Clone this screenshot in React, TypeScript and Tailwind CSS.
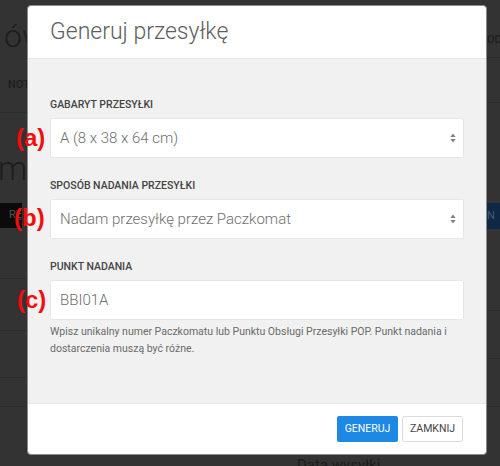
import { useState } from 'react';

function Arrows() {
  return (
    <svg className="pointer-events-none absolute right-[8px] top-1/2 -translate-y-1/2" width="6" height="10" viewBox="0 0 6 10">
      <path d="M3 0.5 L5.6 4 H0.4 Z" fill="#808080" />
      <path d="M3 9.5 L5.6 6 H0.4 Z" fill="#808080" />
    </svg>
  );
}

function Label({ children }: { children: string }) {
  return <div className="mb-[6px] h-[14px] text-[10.5px] font-medium uppercase leading-[14px] text-[#444]">{children}</div>;
}

function Note({ children, className }: { children: string; className: string }) {
  return (
    <div className={`pointer-events-none absolute font-['Liberation_Sans',sans-serif] text-[24px] font-bold leading-[28px] text-[#f20d0d] ${className}`}>
      {children}
    </div>
  );
}

export default function App() {
  const [size, setSize] = useState('A');
  const [mode, setMode] = useState('paczkomat');
  const [point, setPoint] = useState('BBI01A');

  const field = 'h-[40px] w-full rounded-[2px] border border-[#e6e6e6] bg-white pl-[9px] text-[15px] font-light text-[#6e6e6e] outline-none';

  return (
    <div className="relative h-[466px] w-[500px] overflow-hidden bg-[#333333] font-['Roboto',sans-serif]">
      {/* dimmed page behind the dialog */}
      <div className="flex h-full">
        <div className="w-[27px] shrink-0 overflow-hidden whitespace-nowrap text-[#1d1d1d]">
          <div className="mt-[16px] pl-[4px] text-[32px] font-light leading-[40px]">ów</div>
          <div className="mt-[22px] pl-[8px] text-[11px] font-medium leading-[14px]">NOTATKI</div>
          <div className="mt-[20px] border-t border-[#2c2c2c]" />
          <div className="mt-[36px] -ml-[2px] text-[33px] font-light leading-[40px]">mo</div>
          <div className="mt-[14px] flex h-[25px] w-[22px] items-center justify-end bg-[#0b0b0b] text-[11px] text-[#555]">RĘ</div>
          <div className="mt-[50px] border-t border-[#2c2c2c]" />
          <div className="mt-[51px] border-t border-[#2c2c2c]" />
          <div className="mt-[46px] border-t border-[#2c2c2c]" />
          <div className="mt-[28px] border-t border-[#2c2c2c]" />
        </div>
        <div className="flex flex-1 flex-col justify-end">
          <div className="h-[11px] overflow-hidden pl-[270px] text-[15px] leading-[20px] text-[#1b1b1b]">Data wysyłki</div>
        </div>
        <div className="w-[13px] shrink-0 overflow-hidden whitespace-nowrap text-[#1d1d1d]">
          <div className="mt-[33px] text-[11px] font-medium leading-[14px]">ODS</div>
          <div className="mt-[10px] border-t border-[#2c2c2c]" />
          <div className="mt-[44px] border-t border-[#2c2c2c]" />
          <div className="mt-[100px] flex h-[26px] items-center bg-[#0f2846] text-[11px] text-[#4a5a6e]">N</div>
          <div className="mt-[81px] border-t border-[#2c2c2c]" />
          <div className="mt-[47px] border-t border-[#2c2c2c]" />
          <div className="mt-[47px] border-t border-[#2c2c2c]" />
        </div>
      </div>

      {/* dialog */}
      <div className="absolute left-[27px] top-[5px] flex h-[450px] w-[460px] flex-col overflow-hidden rounded-[4px] border border-[#8c8c8c] bg-white">
        <div className="flex h-[53px] shrink-0 items-center border-b border-[#e6e6e6] px-[22px]">
          <h2 className="mt-[1px] text-[23px] font-light text-[#5e5e5e]">Generuj przesyłkę</h2>
        </div>
        <div className="flex-1 bg-[#f1f1f1] px-[22px] pt-[39px]">
          <Label>Gabaryt przesyłki</Label>
          <div className="relative">
            <select value={size} onChange={(e) => setSize(e.target.value)} className={`${field} appearance-none`}>
              <option value="A">A (8 x 38 x 64 cm)</option>
              <option value="B">B (19 x 38 x 64 cm)</option>
              <option value="C">C (41 x 38 x 64 cm)</option>
            </select>
            <Arrows />
          </div>

          <div className="mt-[21px]">
            <Label>Sposób nadania przesyłki</Label>
          </div>
          <div className="relative">
            <select value={mode} onChange={(e) => setMode(e.target.value)} className={`${field} appearance-none`}>
              <option value="paczkomat">Nadam przesyłkę przez Paczkomat</option>
              <option value="kurier">Odbiór przez kuriera</option>
            </select>
            <Arrows />
          </div>

          <div className="mt-[21px]">
            <Label>Punkt nadania</Label>
          </div>
          <input value={point} onChange={(e) => setPoint(e.target.value)} className={field} />
          <p className="mt-[3px] pr-[10px] text-[10.5px] leading-[17px] text-[#6a6a6a]">
            Wpisz unikalny numer Paczkomatu lub Punktu Obsługi Przesyłki POP. Punkt nadania i dostarczenia muszą być różne.
          </p>
        </div>
        <div className="flex h-[51px] shrink-0 items-center justify-end gap-[4px] border-t border-[#e6e6e6] px-[23px]">
          <button className="h-[26px] w-[61px] rounded-[2px] bg-[#1e88e5] text-[10.5px] uppercase text-white">Generuj</button>
          <button className="h-[26px] w-[61px] rounded-[2px] border border-[#dcdcdc] bg-white text-[10.5px] uppercase text-[#444]">Zamknij</button>
        </div>
      </div>

      <Note className="left-[16px] top-[124px]">(a)</Note>
      <Note className="left-[14px] top-[204px]">(b)</Note>
      <Note className="left-[17px] top-[286px]">(c)</Note>
    </div>
  );
}
